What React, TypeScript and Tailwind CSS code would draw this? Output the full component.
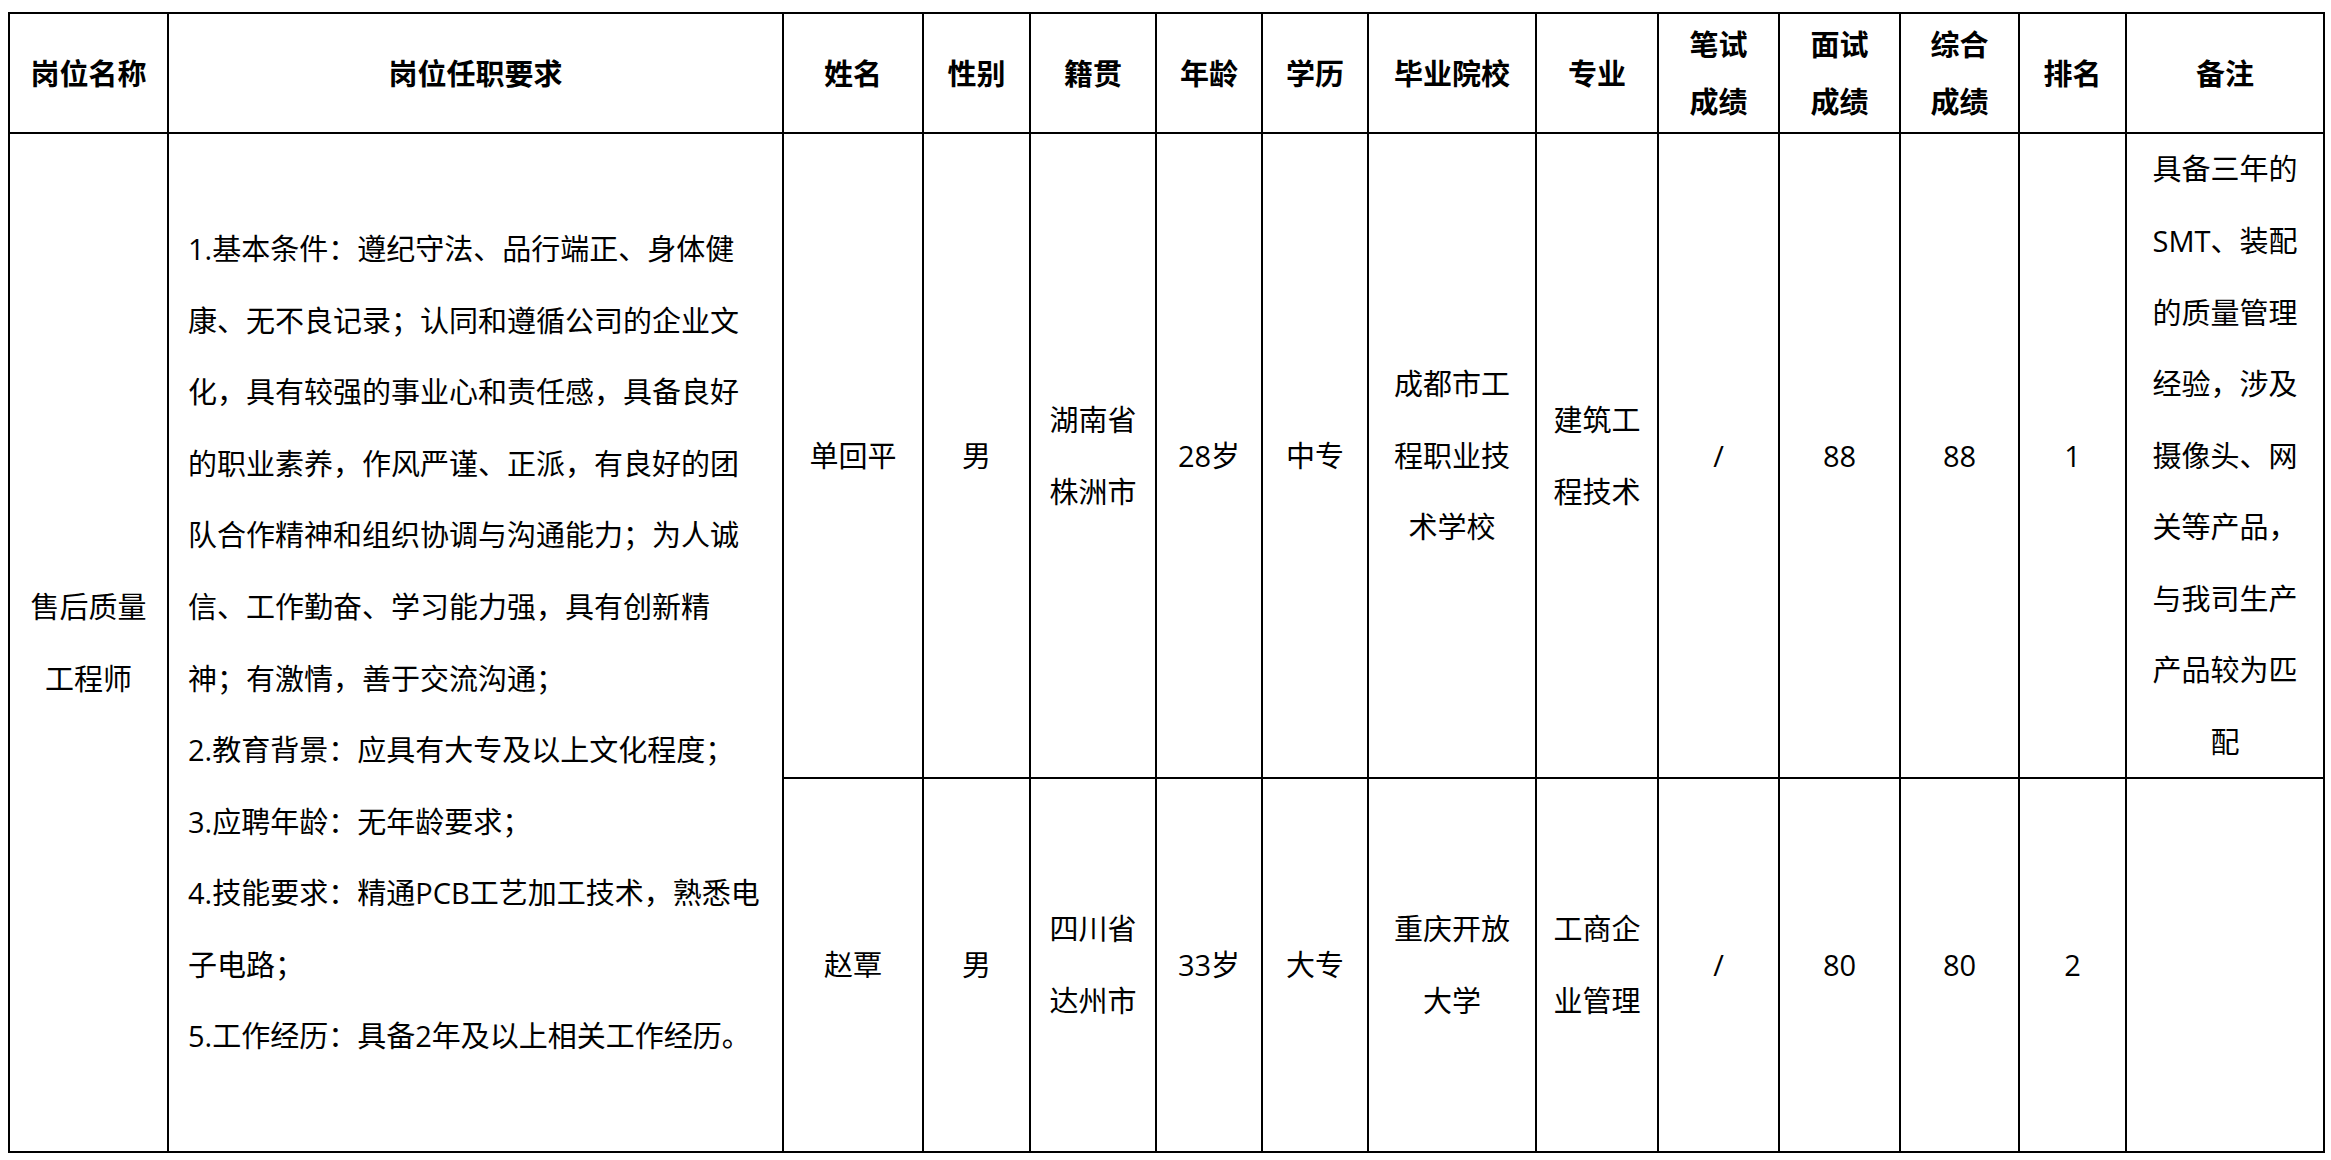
import React from 'react';

type Row = {
    name: string;
    gender: string;
    native: string[];
    age: string;
    edu: string;
    school: string[];
    major: string[];
    written: string;
    interview: string;
    total: string;
    rank: string;
    note: string[];
};

const headers: string[][] = [
    ['岗位名称'],
    ['岗位任职要求'],
    ['姓名'],
    ['性别'],
    ['籍贯'],
    ['年龄'],
    ['学历'],
    ['毕业院校'],
    ['专业'],
    ['笔试', '成绩'],
    ['面试', '成绩'],
    ['综合', '成绩'],
    ['排名'],
    ['备注'],
];

const requirements = [
    '1.基本条件：遵纪守法、品行端正、身体健',
    '康、无不良记录；认同和遵循公司的企业文',
    '化，具有较强的事业心和责任感，具备良好',
    '的职业素养，作风严谨、正派，有良好的团',
    '队合作精神和组织协调与沟通能力；为人诚',
    '信、工作勤奋、学习能力强，具有创新精',
    '神；有激情，善于交流沟通；',
    '2.教育背景：应具有大专及以上文化程度；',
    '3.应聘年龄：无年龄要求；',
    '4.技能要求：精通PCB工艺加工技术，熟悉电',
    '子电路；',
    '5.工作经历：具备2年及以上相关工作经历。',
];

const rows: Row[] = [
    {
        name: '单回平',
        gender: '男',
        native: ['湖南省', '株洲市'],
        age: '28岁',
        edu: '中专',
        school: ['成都市工', '程职业技', '术学校'],
        major: ['建筑工', '程技术'],
        written: '/',
        interview: '88',
        total: '88',
        rank: '1',
        note: ['具备三年的', 'SMT、装配', '的质量管理', '经验，涉及', '摄像头、网', '关等产品，', '与我司生产', '产品较为匹', '配'],
    },
    {
        name: '赵覃',
        gender: '男',
        native: ['四川省', '达州市'],
        age: '33岁',
        edu: '大专',
        school: ['重庆开放', '大学'],
        major: ['工商企', '业管理'],
        written: '/',
        interview: '80',
        total: '80',
        rank: '2',
        note: [],
    },
];

// one cell of the body, lines are broken by hand as in the source document
const Cell = ({ lines }: { lines: string[] }) => (
    <div className="bg-white flex flex-col items-center justify-center text-center leading-[71.6px]">
        {lines.map((l, i) => (
            <div key={i} className="whitespace-nowrap">{l}</div>
        ))}
    </div>
);

const App = () => {
    return (
        <div className="w-[2331px] h-[1160px] bg-white pt-[12px] pl-[8px] text-black text-[29px] font-['Open_Sans','Noto_Sans_CJK_SC',sans-serif]">
            <div className="inline-grid bg-black p-[2px] gap-[2px] grid-cols-[157px_613px_138px_105px_124px_104px_104px_166px_120px_119px_119px_117px_105px_196px] grid-rows-[118px_643px_372px]">
                {headers.map((h, i) => (
                    <div key={i} className="bg-white flex flex-col items-center justify-center text-center font-bold leading-[57px]">
                        {h.map((l, j) => (
                            <div key={j} className="whitespace-nowrap">{l}</div>
                        ))}
                    </div>
                ))}

                <div className="row-span-2 bg-white flex flex-col items-center justify-center text-center leading-[71.6px]">
                    <div>售后质量</div>
                    <div>工程师</div>
                </div>
                <div className="row-span-2 bg-white flex flex-col justify-center pl-[19px] leading-[71.6px]">
                    {requirements.map((l, i) => (
                        <div key={i} className="whitespace-nowrap">{l}</div>
                    ))}
                </div>

                {rows.map((r, i) => (
                    <React.Fragment key={i}>
                        <Cell lines={[r.name]} />
                        <Cell lines={[r.gender]} />
                        <Cell lines={r.native} />
                        <Cell lines={[r.age]} />
                        <Cell lines={[r.edu]} />
                        <Cell lines={r.school} />
                        <Cell lines={r.major} />
                        <Cell lines={[r.written]} />
                        <Cell lines={[r.interview]} />
                        <Cell lines={[r.total]} />
                        <Cell lines={[r.rank]} />
                        <Cell lines={r.note} />
                    </React.Fragment>
                ))}
            </div>
        </div>
    );
};

export default App;
